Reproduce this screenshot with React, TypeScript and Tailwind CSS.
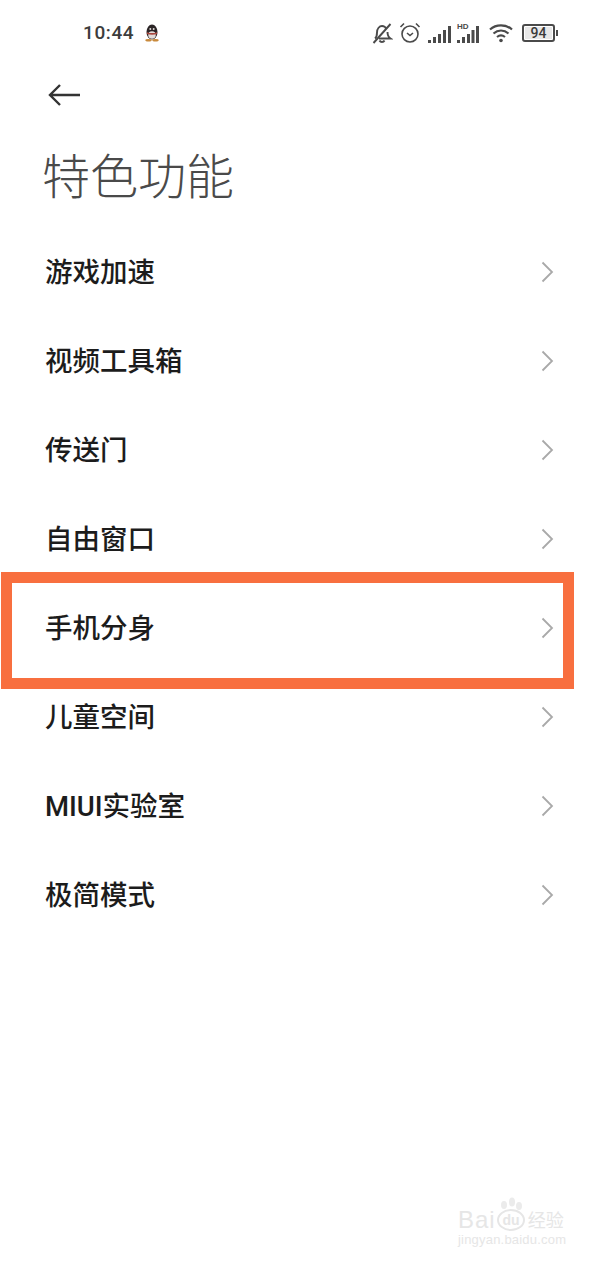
const items = ['游戏加速', '视频工具箱', '传送门', '自由窗口', '手机分身', '儿童空间', 'MIUI实验室', '极简模式']

function Chevron() {
  return (
    <svg width="13" height="22" viewBox="0 0 13 22" fill="none" stroke="#a9a9a9" strokeWidth="1.800" className="-mt-[2px]">
      <path d="M1.500 1.500L11 11l-9.500 9.500" />
    </svg>
  )
}

function Penguin() {
  return (
    <svg width="16" height="18" viewBox="0 0 16 18">
      <ellipse cx="8" cy="8" rx="5.500" ry="7.500" fill="#2b2526" />
      <ellipse cx="8" cy="11" rx="3.800" ry="3.800" fill="#e2dcd9" />
      <path d="M3 8.200c3 1.200 7 1.200 10 0l.2 1.800c-3 1.100-7 1.100-10.400 0z" fill="#a8473f" />
      <circle cx="6.300" cy="5" r="1" fill="#e2dcd9" />
      <circle cx="9.700" cy="5" r="1" fill="#e2dcd9" />
      <ellipse cx="4.500" cy="16.200" rx="3.200" ry="1.300" fill="#c98a3c" />
      <ellipse cx="11.500" cy="16.200" rx="3.200" ry="1.300" fill="#c98a3c" />
    </svg>
  )
}

function StatusIcons() {
  return (
    <div className="flex items-center">
      {/* muted bell */}
      <svg width="22" height="22" viewBox="0 0 22 22" fill="none" stroke="#4a4a4a" strokeWidth="1.900" className="mr-[6px]">
        <path d="M4 16.500c2-1.500 2-3.500 2-6C6 6.500 8.500 4 11 4c2 0 3.500 1 4.500 3M16.500 10c0 3 .5 5 3 6.500H8" />
        <path d="M8.500 18.500c1 2 4 2 5 0M2.500 21L19.500 2" />
      </svg>
      {/* alarm */}
      <svg width="22" height="22" viewBox="0 0 22 22" fill="none" stroke="#4a4a4a" strokeWidth="1.600" className="mr-[7px]">
        <circle cx="11" cy="12" r="8" />
        <path d="M8 11l3 2.500 3-2.500M1.500 5L5 1.500M20.500 5L17 1.500" />
      </svg>
      {/* signal */}
      <svg width="23" height="17" viewBox="0 0 23 17" fill="#4a4a4a" className="mr-[6px] mt-[2px]">
        <rect x="0" y="14" width="3" height="3" />
        <rect x="5" y="11" width="3" height="6" />
        <rect x="10" y="8" width="3" height="9" />
        <rect x="15" y="4" width="3" height="13" />
        <rect x="20" y="0" width="3" height="17" />
      </svg>
      {/* HD signal */}
      <div className="relative mr-[10px] mt-[2px]">
        <span className="absolute left-0 top-[-4px] text-[8px] leading-[9px] font-bold text-[#4a4a4a] [font-family:'Liberation_Sans',sans-serif]">HD</span>
        <svg width="22" height="17" viewBox="0 0 22 17" fill="#4a4a4a">
          <rect x="0" y="14" width="3" height="3" />
          <rect x="5" y="11" width="3" height="6" />
          <rect x="10" y="8" width="3" height="9" />
          <rect x="14.500" y="4" width="3" height="13" />
          <rect x="19" y="0" width="3" height="17" />
        </svg>
      </div>
      {/* wifi */}
      <svg width="24" height="20" viewBox="0 0 24 20" fill="none" stroke="#4a4a4a" strokeWidth="2.200" className="mr-[9px]">
        <path d="M1 6.500C7 1 17 1 23 6.500M4.500 10.500c4.500-4 10.500-4 15 0M8 14c2.500-2 5.500-2 8 0" />
        <circle cx="12" cy="17.500" r="1.800" fill="#4a4a4a" stroke="none" />
      </svg>
      {/* battery */}
      <div className="flex items-center">
        <div className="w-[33px] h-[18px] rounded-[3px] border-2 border-[#4a4a4a] flex items-center justify-center p-[1px]">
          <div className="w-full h-full bg-[#e8e8e8] flex items-center justify-center text-[14px] font-medium leading-none text-[#3a3a3a] [font-family:'Roboto',sans-serif]">94</div>
        </div>
        <div className="w-[2px] h-[6px] ml-[1px] bg-[#4a4a4a]" />
      </div>
    </div>
  )
}

function Watermark() {
  return (
    <div className="absolute left-[458px] top-[1196px] w-[110px] text-[#e6e6e6] [font-family:'Liberation_Sans',sans-serif]">
      <div className="flex items-end">
        <span className="text-[24px] leading-[26px] tracking-[1px]">Bai</span>
        <svg width="32" height="36" viewBox="0 0 32 36" fill="#ebebeb" className="-ml-[1px] mb-[1px]">
          <ellipse cx="16" cy="24" rx="13" ry="10" fill="none" stroke="#e6e6e6" strokeWidth="2" />
          <ellipse cx="9" cy="9" rx="3" ry="4" />
          <ellipse cx="17" cy="6" rx="3" ry="4.500" />
          <ellipse cx="24" cy="10" rx="3" ry="4" />
          <text x="16" y="29" fontSize="14" fontWeight="700" textAnchor="middle" fill="#e6e6e6">du</text>
        </svg>
        <span className="text-[18px] leading-[24px] ml-[1px] [font-family:'Liberation_Sans','Noto_Sans_CJK_SC',sans-serif]">经验</span>
      </div>
      <div className="text-[13px] leading-[16px] tracking-[0.2px] -mt-[1px]">jingyan.baidu.com</div>
    </div>
  )
}

export default function App() {
  return (
    <div className="relative w-[599px] h-[1261px] overflow-hidden bg-white [font-family:'Liberation_Sans','Noto_Sans_CJK_SC',sans-serif]">
      <div className="h-[66px] pl-[83px] pr-[41px] flex items-center justify-between">
        <div className="flex items-center">
          <span className="text-[19px] font-medium tracking-[0.6px] text-[#3c3c3c] [font-family:'Roboto',sans-serif]">10:44</span>
          <div className="ml-[10px]">
            <Penguin />
          </div>
        </div>
        <StatusIcons />
      </div>

      <div className="h-[58px] pl-[48px] flex items-center">
        <svg width="33" height="24" viewBox="0 0 33 24" fill="none" stroke="#333" strokeWidth="2.400">
          <path d="M32 12H2M12 2L2 12l10 10" />
        </svg>
      </div>

      <h1 className="h-[104px] pl-[42px] pt-[20px] text-[48px] leading-[68px] font-light text-[#4a4a4a]">特色功能</h1>

      <ul className="flex flex-col [font-family:'Roboto','Noto_Sans_CJK_SC',sans-serif]">
        {items.map((item) => (
          <li key={item} className="relative h-[89px] pl-[45px] pr-[45px] flex items-center justify-between">
            <span className="text-[27.500px] font-medium text-[#1c1c1c]">{item}</span>
            <Chevron />
            {item === '手机分身' && (
              <div className="absolute left-[1px] top-[-12px] w-[573px] h-[117px] border-[11px] border-[#f86f3f]" />
            )}
          </li>
        ))}
      </ul>

      <Watermark />
    </div>
  )
}
